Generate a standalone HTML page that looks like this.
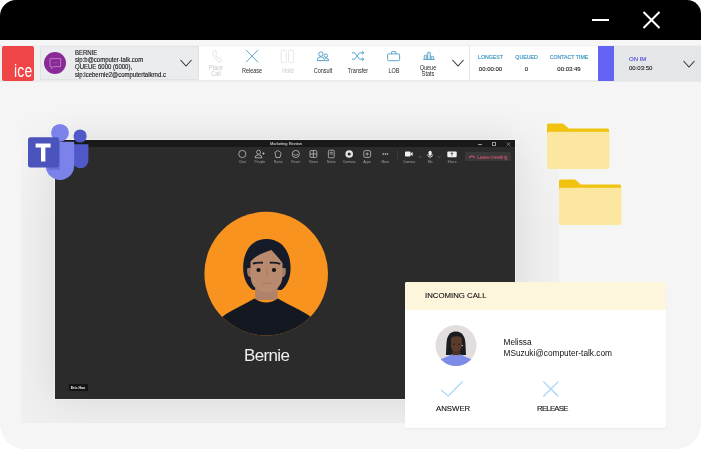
<!DOCTYPE html>
<html><head><meta charset="utf-8">
<style>
*{margin:0;padding:0;box-sizing:border-box}
html,body{width:702px;height:450px;overflow:hidden;background:#fff;font-family:"Liberation Sans",sans-serif;-webkit-font-smoothing:antialiased}
#dev{will-change:transform}
.a{position:absolute}
#dev{position:absolute;left:0;top:0;width:701px;height:449px;background:#f5f5f5;border-radius:16px 14px 25px 25px;overflow:hidden}
#hdr{left:0;top:0;width:701px;height:40px;background:#000}
#strip{left:0;top:40px;width:701px;height:42px;background:linear-gradient(#f6f6f6 0,#f6f6f6 5px,#f0f0f0 5px,#f0f0f0 40px,#ebebeb 40px)}
.t{position:absolute;white-space:nowrap;line-height:1}
.lbl{font-size:6.4px;color:#2a2a2a;text-align:center;width:40px;transform:scaleX(0.86)}
.stat{font-size:6px;color:#2f8fbf;text-align:center;transform:scaleX(0.87);-webkit-text-stroke:0.15px #2f8fbf}
.val{font-size:6px;color:#222;text-align:center;-webkit-text-stroke:0.12px #222}
</style></head><body>
<div id="dev">
  <div id="hdr" class="a">
    <div class="a" style="left:592px;top:19px;width:17px;height:2px;background:#fff"></div>
    <svg class="a" style="left:642px;top:11px" width="19" height="18" viewBox="0 0 19 18"><path d="M1.5 1 L17.5 17 M17.5 1 L1.5 17" stroke="#fff" stroke-width="2"/></svg>
  </div>
  <div id="strip" class="a"></div>
  <!-- ice logo -->
  <div class="a" style="left:2px;top:46px;width:32px;height:35px;background:#ef4546;border-radius:2px"></div>
  <div class="t" style="left:13.8px;top:63.2px;font-size:17.5px;color:#fff;letter-spacing:0.2px;transform:scaleX(0.8);transform-origin:0 0">ice</div>
  <!-- contact panel -->
  <div class="a" style="left:40px;top:45.5px;width:159px;height:34.5px;background:#ebecee;border:1px solid #e2e2e4"></div>
  <div class="a" style="left:44px;top:52px;width:22px;height:22px;border-radius:50%;background:#8a2a98"></div>
  <svg class="a" style="left:44px;top:52px" width="22" height="22" viewBox="44 52 22 22"><path d="M50 58.6 H60.6 V66.6 H53.6 L51.6 68.6 V66.6 H50 Z" fill="none" stroke="#c48fcd" stroke-width="0.8"/><path d="M53.6 62.6 h0.8 M55 62.6 h0.8 M56.4 62.6 h0.8" stroke="#b77ac2" stroke-width="0.6"/></svg>
  <div class="t" style="left:75px;top:48.6px;font-size:6.4px;line-height:7.4px;color:#151515;-webkit-text-stroke:0.12px #151515;transform:scaleX(0.94);transform-origin:0 0">BERNIE<br>sip:b@computer-talk.com<br>QUEUE 6000 (6000),<br>sip:icebernie2@computertalkrnd.c</div>
  <svg class="a" style="left:180px;top:59px" width="12" height="9" viewBox="0 0 12 9"><path d="M0.5 1 L6 7 L11.5 1" stroke="#333" stroke-width="1.1" fill="none"/></svg>
  <!-- toolbar -->
  <div class="a" style="left:199px;top:45.5px;width:270px;height:34.5px;background:#fff"></div>
  <div class="a" style="left:469px;top:45.5px;width:1px;height:34.5px;background:#e6e6e6"></div>
  <div class="a" style="left:470px;top:45.5px;width:128px;height:34.5px;background:#fff"></div>
  <div class="a" style="left:598px;top:45.5px;width:16px;height:35px;background:#6464f4"></div>
  <div class="a" style="left:614px;top:45.5px;width:87px;height:35px;background:#e5e6e8"></div>
  <svg class="a" style="left:452px;top:59px" width="12" height="9" viewBox="0 0 12 9"><path d="M0.5 1 L6 7 L11.5 1" stroke="#333" stroke-width="1.1" fill="none"/></svg>
  <svg class="a" style="left:683px;top:59.5px" width="12" height="9" viewBox="0 0 12 9"><path d="M0.5 1 L6 7 L11.5 1" stroke="#333" stroke-width="1.1" fill="none"/></svg>

  <svg class="a" style="left:200px;top:46px" width="250" height="20" viewBox="200 46 250 20">
    <path d="M214.2 50.8 L215.6 50.6 L216.8 53.6 L215.6 54.8 Q216.6 57.6 218.6 59.2 L219.8 58.2 L221.8 60.2 L220.9 61.8 Q218.8 62.8 216 59.6 Q212 55 212.8 52 Z" fill="none" stroke="#dcdcdc" stroke-width="0.8"/>
    <path d="M246 50 L258.1 62.3 M258.1 50 L246 62.3" stroke="#55a6cc" stroke-width="1"/>
    <rect x="281.1" y="50.3" width="5.2" height="12.2" rx="0.8" fill="none" stroke="#e2e2e2" stroke-width="0.8"/>
    <rect x="288.5" y="50.3" width="5.2" height="12.2" rx="0.8" fill="none" stroke="#e2e2e2" stroke-width="0.8"/>
    <g fill="none" stroke="#3f97c0" stroke-width="0.85">
      <circle cx="320.9" cy="54.1" r="2.2"/>
      <path d="M317.2 60.6 Q317.2 56.8 320.9 56.8 Q324.6 56.8 324.6 60.6 Z"/>
      <circle cx="325.9" cy="55.6" r="1.7"/>
      <path d="M324.8 57.9 Q328.8 57.5 328.8 60.6 H324.9"/>
      <path d="M352 52.8 H354.8 L359.6 59.2 H363.8 M352 59.2 H354.8 L359.6 52.8 H363.8 M362 51.3 L363.9 52.8 L362 54.3 M362 57.7 L363.9 59.2 L362 60.7"/>
      <rect x="387.6" y="53.9" width="12" height="6.8" rx="1"/>
      <path d="M391.5 53.9 V52.3 Q391.5 51.5 392.3 51.5 H395 Q395.8 51.5 395.8 52.3 V53.9"/>
    </g>
    <g fill="#cfe7f2" stroke="#3f97c0" stroke-width="0.7">
      <path d="M424.2 59.4 V56 Q424.2 55.2 425.5 55.2 Q426.8 55.2 426.8 56 V59.4"/>
      <path d="M427.4 59.4 V53 Q427.4 52.2 429 52.2 Q430.5 52.2 430.5 53 V59.4"/>
      <path d="M431.1 59.4 V57 Q431.1 56.3 432.5 56.3 Q433.8 56.3 433.8 57 V59.4"/>
    </g>
    <path d="M423.2 59.5 H434.5" stroke="#3f97c0" stroke-width="0.8"/>
  </svg>
  <div class="t lbl" style="left:196px;top:65px;color:#c8c8c8;line-height:5.9px">Place<br>Call</div>
  <div class="t lbl" style="left:232px;top:68px">Release</div>
  <div class="t lbl" style="left:268px;top:68px;color:#c8c8c8">Hold</div>
  <div class="t lbl" style="left:303px;top:68px">Consult</div>
  <div class="t lbl" style="left:338px;top:68px">Transfer</div>
  <div class="t lbl" style="left:374px;top:68px">LOB</div>
  <div class="t lbl" style="left:408px;top:65px;line-height:5.9px">Queue<br>Stats</div>

  <div class="t stat" style="left:470px;top:53.5px;width:41px">LONGEST</div>
  <div class="t val" style="left:470px;top:65.5px;width:41px">00:00:00</div>
  <div class="t stat" style="left:506px;top:53.5px;width:41px">QUEUED</div>
  <div class="t val" style="left:506px;top:65.5px;width:41px">0</div>
  <div class="t stat" style="left:544px;top:53.5px;width:50px">CONTACT TIME</div>
  <div class="t val" style="left:544px;top:65.5px;width:50px">00:03:49</div>
  <div class="t" style="left:629px;top:55.5px;font-size:6px;color:#5050d8;-webkit-text-stroke:0.15px #5050d8">ON IM</div>
  <div class="t" style="left:629px;top:64.5px;font-size:6px;color:#222;-webkit-text-stroke:0.12px #222">00:03:50</div>

  <!-- shadow card behind teams -->
  <div class="a" style="left:21px;top:82px;width:537.5px;height:340.5px;overflow:hidden;background:linear-gradient(rgba(0,0,0,0) 20px,rgba(0,0,0,0.022) 140px)"><div class="a" style="left:34px;top:58px;width:460px;height:259px;background:#2b2b2b;box-shadow:0 0 0 1px rgba(255,255,255,0.4),0 0 40px 0 rgba(0,0,0,0.1)"></div></div>

  <!-- teams window -->
  <div class="a" style="left:55px;top:140px;width:460px;height:259px;background:#2b2b2b"></div>
  <div class="a" style="left:55px;top:140px;width:460px;height:6.8px;background:#191919"></div>
  <div class="t" style="left:270px;top:141.8px;font-size:4px;color:#ececec">Marketing Review</div>
  <div class="a" style="left:478px;top:143.7px;width:4px;height:0.8px;background:#999"></div>
  <div class="a" style="left:492.2px;top:142.4px;width:3.8px;height:3.4px;border:0.7px solid #999"></div>
  <svg class="a" style="left:506px;top:142px" width="5" height="4.5" viewBox="0 0 5 4.5"><path d="M0.5 0.3 L4.5 4.2 M4.5 0.3 L0.5 4.2" stroke="#999" stroke-width="0.7"/></svg>
  <svg class="a" style="left:236px;top:148px" width="222" height="12" viewBox="236 148 222 12">
    <g fill="none" stroke="#c6c6c6" stroke-width="0.75">
      <circle cx="242.3" cy="154" r="3.6"/>
      <circle cx="258.6" cy="152.2" r="2"/><path d="M255 157.8 Q255 154.8 258.6 154.8 Q262 154.8 262 157.8 Z"/><path d="M262.3 153.5 h2.4 M263.5 152.3 v2.4"/>
      <path d="M276 157.5 L275 153 Q275 151.5 276.2 151.8 L276.5 151 Q277.5 150.3 278.2 151 Q279.3 150.8 279.8 151.8 Q281 152.2 281 153.5 L280 157.5 Z"/>
      <circle cx="295.8" cy="154" r="3.6"/><path d="M293.5 154.3 Q295.8 156.5 298.1 154.3"/>
      <rect x="310" y="150.6" width="6.8" height="6.8" rx="1"/><path d="M310 154 h6.8 M313.4 150.6 v6.8"/>
      <rect x="328.4" y="150.2" width="5.8" height="7.6" rx="1"/><path d="M329.8 152.3 h3 M329.8 154 h3"/>
      <rect x="363.8" y="150.6" width="6.8" height="6.8" rx="1.5"/><path d="M365.6 154 h3.2 M367.2 152.4 v3.2"/>
    </g>
    <circle cx="349.2" cy="154" r="3.8" fill="#e6e6e6"/><circle cx="349.2" cy="154" r="1.6" fill="#2b2b2b"/>
    <g fill="#e6e6e6"><circle cx="383.2" cy="154" r="0.75"/><circle cx="385.3" cy="154" r="0.75"/><circle cx="387.4" cy="154" r="0.75"/></g>
    <rect x="397.2" y="150" width="0.6" height="13" fill="#444"/>
    <g fill="#f2f2f2">
      <rect x="405" y="151.5" width="5.5" height="5" rx="0.8"/><path d="M410.3 153.8 L412.6 152 V156 L410.3 154.2 Z"/>
      <rect x="428.6" y="150.8" width="3" height="5" rx="1.5"/><path d="M427.5 154.5 Q427.5 157 430.1 157 Q432.7 157 432.7 154.5" stroke="#f2f2f2" stroke-width="0.7" fill="none"/><rect x="429.8" y="157" width="0.6" height="1.2"/>
      <rect x="447.3" y="151.4" width="9.4" height="5.8" rx="1"/>
    </g>
    <path d="M451.9 155.8 v-3 M450.6 154 L451.9 152.6 L453.2 154" stroke="#2b2b2b" stroke-width="0.7" fill="none"/>
    <path d="M419 156.5 L420 157.5 L421 156.5 M438.2 156.5 L439.2 157.5 L440.2 156.5" stroke="#aaa" stroke-width="0.5" fill="none"/>
  </svg>
  <div class="t" style="left:232.3px;top:161px;width:20px;text-align:center;font-size:3.4px;color:#a0a0a0">Chat</div>
  <div class="t" style="left:249.9px;top:161px;width:20px;text-align:center;font-size:3.4px;color:#a0a0a0">People</div>
  <div class="t" style="left:268.2px;top:161px;width:20px;text-align:center;font-size:3.4px;color:#a0a0a0">Raise</div>
  <div class="t" style="left:285.8px;top:161px;width:20px;text-align:center;font-size:3.4px;color:#a0a0a0">React</div>
  <div class="t" style="left:303.4px;top:161px;width:20px;text-align:center;font-size:3.4px;color:#a0a0a0">Views</div>
  <div class="t" style="left:321.3px;top:161px;width:20px;text-align:center;font-size:3.4px;color:#a0a0a0">Notes</div>
  <div class="t" style="left:339.2px;top:161px;width:20px;text-align:center;font-size:3.4px;color:#a0a0a0">Contoso</div>
  <div class="t" style="left:357.2px;top:161px;width:20px;text-align:center;font-size:3.4px;color:#a0a0a0">Apps</div>
  <div class="t" style="left:375.3px;top:161px;width:20px;text-align:center;font-size:3.4px;color:#a0a0a0">More</div>
  <div class="t" style="left:399px;top:161px;width:20px;text-align:center;font-size:3.4px;color:#a0a0a0">Camera</div>
  <div class="t" style="left:420.4px;top:161px;width:20px;text-align:center;font-size:3.4px;color:#a0a0a0">Mic</div>
  <div class="t" style="left:442px;top:161px;width:20px;text-align:center;font-size:3.4px;color:#a0a0a0">Share</div>
  <div class="a" style="left:464.7px;top:151.7px;width:45.9px;height:9.8px;background:#393939;border-radius:1.5px"></div>
  <svg class="a" style="left:469px;top:155.3px" width="6" height="4" viewBox="0 0 6 4"><path d="M0.8 3 Q0.8 1 3 1 Q5.2 1 5.2 3" stroke="#e45474" stroke-width="1.1" fill="none"/></svg>
  <div class="t" style="left:477.2px;top:155.6px;font-size:4.8px;color:#e45878;letter-spacing:-0.1px">Leave meeting</div>
  <div class="a" style="left:68.5px;top:384.4px;width:19px;height:6.8px;background:#141414"></div>
  <div class="t" style="left:68.5px;top:387px;width:19px;text-align:center;font-size:3.6px;font-weight:bold;color:#e8e8e8">Eric Hao</div>
  <svg class="a" style="left:200px;top:207px" width="133" height="133" viewBox="200 207 133 133">
    <defs><clipPath id="cc"><circle cx="266.2" cy="273.6" r="61.8"/></clipPath></defs>
    <circle cx="266.2" cy="273.6" r="61.8" fill="#f7931e"/>
    <g clip-path="url(#cc)">
      <path d="M266.5 239 C252 239 244 250 243.2 266 C242.8 276 246 285 253 290 L281.5 290 C288 285 291 276 290.5 266 C289.8 250 281 239 266.5 239 Z" fill="#151b28"/>
      <path d="M255.2 288 L255.2 300 L277.6 300 L277.6 288 Z" fill="#b0826a"/>
      <path d="M247.8 268 C246.5 268 246.8 276 249.5 277 L252 277 L252 268 Z" fill="#a77a62"/>
      <path d="M285 268 C286.5 268 286.2 276 283.5 277 L281 277 L281 268 Z" fill="#a77a62"/>
      <path d="M250.5 262 C254 256 263 253 271.5 250 C275 254 279 258 282.5 263 L282.5 276 C282.5 286 275 292.3 266.4 292.3 C257.8 292.3 250.5 286 250.5 276 Z" fill="#b98a6e"/>
      <path d="M252.8 263.6 Q258 262.2 263 262.8 M269.8 262.8 Q275 262.2 280.3 263.9" stroke="#151b28" stroke-width="1.9" fill="none"/>
      <circle cx="258.5" cy="270" r="2.1" fill="#111"/>
      <circle cx="274" cy="270" r="2.1" fill="#111"/>
      <path d="M266.4 267 L267.3 277.5" stroke="#a47760" stroke-width="0.8"/>
      <path d="M262.5 282.8 Q267 284.5 271.5 282.8" stroke="#a47760" stroke-width="0.9" fill="none"/>
      <path d="M215 340 L218 322 C222 314 236 309 254.5 298.5 Q266 306.5 278 298.5 C296 309 311 314 315 322 L318 340 Z" fill="#141820"/>
    </g>
  </svg>
  <div class="t" style="left:244px;top:347px;font-size:17px;color:#f0f0f0;letter-spacing:-0.65px">Bernie</div>

  <!-- folders -->
  <svg class="a" style="left:546.9px;top:122.5px" width="64" height="48" viewBox="0 0 64 48">
    <path d="M0 2 Q0 0.5 1.5 0.5 H16 L21.8 5.5 H60.5 Q62 5.5 62 7 V12 H0 Z" fill="#f1c30f"/>
    <rect x="0" y="8.7" width="62.5" height="37.4" rx="2" fill="#fce7a0"/>
  </svg>
  <svg class="a" style="left:559.2px;top:178.5px" width="64" height="48" viewBox="0 0 64 48">
    <path d="M0 2 Q0 0.5 1.5 0.5 H16 L21.8 5.5 H60.5 Q62 5.5 62 7 V12 H0 Z" fill="#f1c30f"/>
    <rect x="0" y="8.7" width="62.5" height="37.4" rx="2" fill="#fce7a0"/>
  </svg>

  <!-- teams logo -->
  <svg class="a" style="left:20px;top:115px" width="80" height="80" viewBox="20 115 80 80">
    <circle cx="80.1" cy="136" r="6.6" fill="#5059c9"/>
    <path d="M72.4 144.3 H88.4 V160.3 A8 8 0 0 1 72.4 160.3 Z" fill="#5059c9"/>
    <circle cx="60" cy="132.8" r="8.9" fill="#7b83eb"/>
    <path d="M45.8 141.7 H74.2 V165.7 A14.2 14.2 0 0 1 45.8 165.7 Z" fill="#7b83eb"/>
    <path d="M45.8 141.7 H60 V170 H50 A14.2 14.2 0 0 1 45.8 165.7 Z" fill="#5b62c9" opacity="0.55"/>
    <rect x="28" y="137.2" width="31.1" height="30.2" rx="2.5" fill="#4b53bc"/>
    <path d="M35.6 143.4 H50.6 V147.5 H45.4 V161.6 H41 V147.5 H35.6 Z" fill="#fff"/>
  </svg>

  <!-- incoming call card -->
  <div class="a" style="left:405px;top:282px;width:261px;height:145.5px;background:#fff;border-radius:2px;overflow:hidden;box-shadow:0 1px 2px rgba(0,0,0,0.05)">
    <div class="a" style="left:0;top:0;width:261px;height:27.5px;background:#fdf5dc"></div>
  </div>
  <div class="t" style="left:425px;top:292px;font-size:7.8px;color:#111;-webkit-text-stroke:0.12px #111">INCOMING CALL</div>
  <svg class="a" style="left:434px;top:323px" width="45" height="45" viewBox="434 323 45 45">
    <defs><clipPath id="mc"><circle cx="456" cy="345.5" r="20.5"/></clipPath></defs>
    <circle cx="456" cy="345.5" r="20.5" fill="#e2dedd"/>
    <g clip-path="url(#mc)">
      <path d="M455.8 331.6 C449 331.6 447 337 446.5 343 L445.9 355 L466 355 L465.4 343 C465 337 462.5 331.6 455.8 331.6 Z" fill="#1b1b22"/>
      <rect x="452.3" y="348" width="7.6" height="7.5" fill="#4f3226"/>
      <path d="M451 339 C451 337 453 336.3 456.4 336.3 C460 336.3 461.8 337 461.8 339 L461.8 346 C461.8 349.5 459.5 351.2 456.4 351.2 C453.3 351.2 451 349.5 451 346 Z" fill="#5b3b2b"/>
      <circle cx="462.3" cy="345.6" r="0.7" fill="#ddd"/><path d="M453 344.3 h1.8 M458.2 344.3 h1.8" stroke="#24160f" stroke-width="0.8"/>
      <path d="M436 368 L438 361 C439.5 359 444 358.6 451.5 354.2 C454 356 458.5 356 460.8 354.2 C468 358.6 472.5 359 474 361 L476 368 Z" fill="#7d8ce8"/>
    </g>
  </svg>
  <div class="t" style="left:503.5px;top:337px;font-size:8.3px;color:#111;line-height:10.7px">Melissa<br>MSuzuki@computer-talk.com</div>
  <svg class="a" style="left:438px;top:378px" width="128" height="22" viewBox="438 378 128 22"><path d="M441.2 390 L448.3 396 L462.6 381.5 M543.4 381.5 L558.3 396.4 M558.3 381.5 L543.4 396.4" stroke="#b3dbf4" stroke-width="1.5" fill="none"/></svg>
  <div class="t" style="left:436px;top:405px;font-size:7.8px;color:#111;-webkit-text-stroke:0.12px #111">ANSWER</div>
  <div class="t" style="left:537px;top:405px;font-size:7.8px;color:#111;-webkit-text-stroke:0.12px #111;letter-spacing:-0.75px">RELEASE</div>
</div>
</body></html>
